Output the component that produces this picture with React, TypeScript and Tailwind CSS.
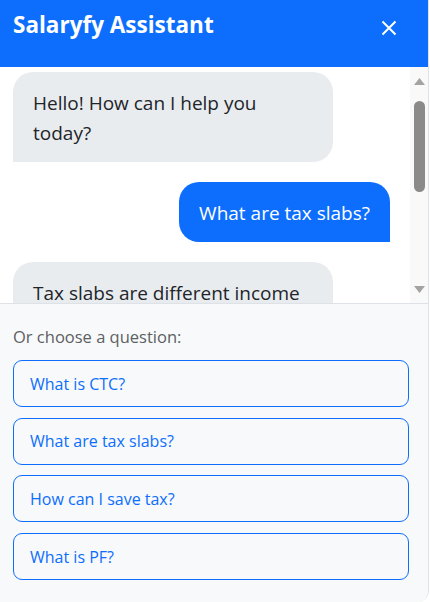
import React from "react";

const font = { fontFamily: '"Open Sans", "Noto Sans", sans-serif' };

function Scrollbar() {
  return (
    <div className="w-[18px] shrink-0 bg-[#f9f9f9] flex flex-col items-center pt-[11px] pb-[10px]">
      <svg width="11" height="7" viewBox="0 0 11 7">
        <polygon points="5.5,0 11,7 0,7" fill="#a3a3a3" />
      </svg>
      <div className="mt-[16px] w-[11px] h-[91px] rounded-full bg-[#8a8a8a]" />
      <div className="flex-1" />
      <svg width="11" height="7" viewBox="0 0 11 7">
        <polygon points="0,0 11,0 5.5,7" fill="#a3a3a3" />
      </svg>
    </div>
  );
}

export default function App() {
  const questions = ["What is CTC?", "What are tax slabs?", "How can I save tax?", "What is PF?"];
  return (
    <div style={font} className="w-[429px] h-[602px] bg-white border-r border-[#dee2e6] rounded-br-xl overflow-hidden flex flex-col">
      <div className="h-[67px] shrink-0 bg-[#0d6efd] flex items-start justify-between pl-[13px] pr-[31px] pt-[10px]">
        <h1 className="text-white font-bold text-[22.5px] leading-[30px]">Salaryfy Assistant</h1>
        <button className="mt-[10px] w-[16px] h-[16px] flex items-center justify-center">
          <svg width="16" height="16" viewBox="0 0 16 16">
            <path d="M1.5 1.5 L14.5 14.5 M14.5 1.5 L1.5 14.5" stroke="white" strokeWidth="2" strokeLinecap="butt" />
          </svg>
        </button>
      </div>
      <div className="h-[236px] shrink-0 flex">
        <div className="flex-1 overflow-hidden flex flex-col gap-5 pt-[5px] pl-[13px] pr-[20px] text-[19px] leading-[30px]">
          <div className="w-[320px] shrink-0 bg-[#e9ecef] text-[#212529] px-5 pt-[16px] pb-[14px] rounded-t-[20px] rounded-br-[20px]">
            Hello! How can I help you today?
          </div>
          <div className="self-end shrink-0 bg-[#0d6efd] text-white px-5 pt-[16px] pb-[14px] rounded-t-[20px] rounded-bl-[20px]">
            What are tax slabs?
          </div>
          <div className="w-[320px] shrink-0 bg-[#e9ecef] text-[#212529] px-5 pt-[16px] pb-[14px] rounded-t-[20px] rounded-br-[20px]">
            Tax slabs are different income ranges.
          </div>
        </div>
        <Scrollbar />
      </div>
      <div className="flex-1 bg-[#f8f9fa] border-t border-[#dee2e6] pl-[13px] pr-[19px] pt-[21px]">
        <p className="text-[16.5px] leading-6 text-[#5c5f62] mb-[11px]">Or choose a question:</p>
        <div className="flex flex-col gap-[10.7px]">
          {questions.map((q) => (
            <button
              key={q}
              className="h-[47px] w-full text-left pl-[16px] border border-[#0d6efd] rounded-[9px] text-[#0d6efd] text-[16px]"
            >
              {q}
            </button>
          ))}
        </div>
      </div>
    </div>
  );
}
